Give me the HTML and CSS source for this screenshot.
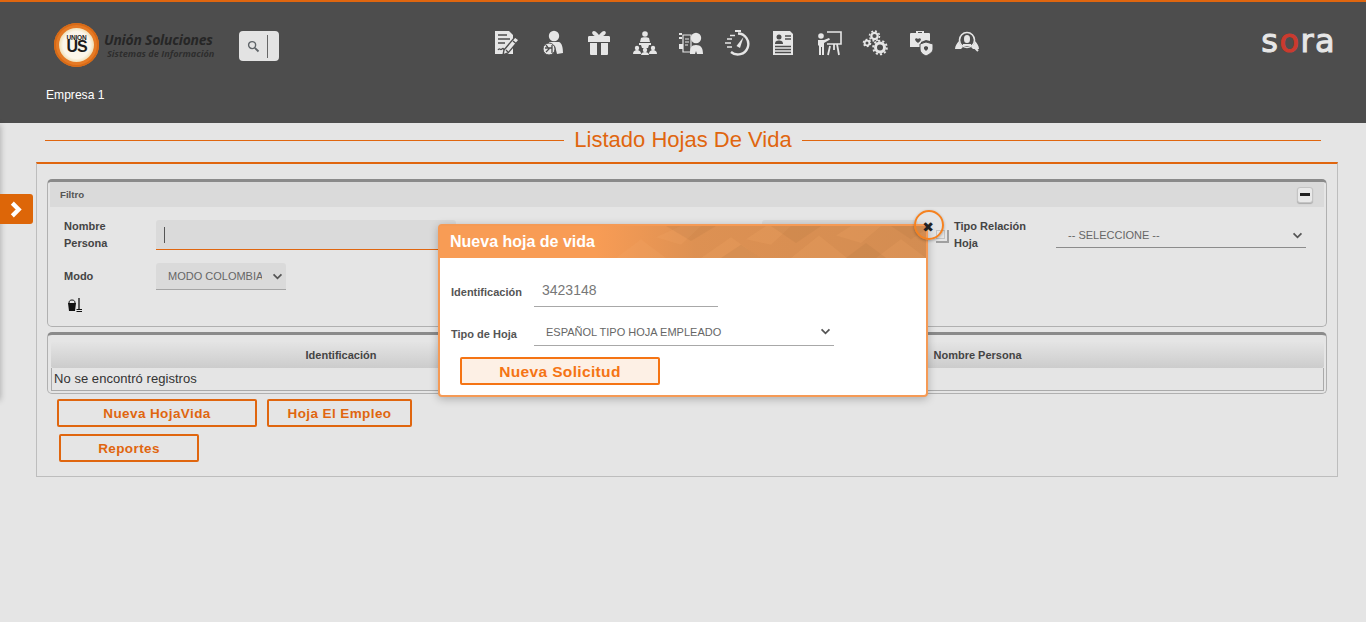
FILE: index.html
```html
<!DOCTYPE html>
<html lang="es">
<head>
<meta charset="utf-8">
<title>Listado Hojas De Vida</title>
<link rel="stylesheet" href="styles.css">
</head>
<body>
<header class="top">
  <div class="top-row">
    <div class="brand">
      <div class="brand-mark"><div class="brand-core"><span class="brand-small">UNION</span><span class="brand-big">US</span></div></div>
      <div class="brand-text"><span class="brand-name">Unión Soluciones</span><span class="brand-sub">Sistemas de Información</span></div>
    </div>
    <div class="search">
      <svg class="search-icon" viewBox="0 0 14 14"><circle cx="5.5" cy="5.5" r="3.8" fill="none" stroke="#5f6468" stroke-width="1.5"/><path d="M8.4 8.4l4 4" stroke="#5f6468" stroke-width="2"/></svg>
      <span class="search-bar"></span>
    </div>
    <nav class="icons">
      <svg class="ico" viewBox="0 0 26 26"><path d="M1 1h14l4 4v19H1z"/><path d="M4 5h9M4 9h12M4 13h7M4 20c2-3 2 1 4-1s1 2 3 0" class="cut"/><path d="M21 7l4 3-11 13-5 2 1-5z" stroke="#4d4d4d" stroke-width="1.4"/><path d="M19 11l3 2.500M12 20l2 2" class="cut"/></svg>
      <svg class="ico" viewBox="0 0 26 26"><circle cx="14" cy="6" r="5.200"/><path d="M9 12h10c3 1 4 6 4 11l-6 1-2-8-6-2z"/><circle cx="9" cy="19" r="6" stroke="#4d4d4d"/><path d="M6 15l3 4-3 3M12 15v8M5 18h7" class="cut"/></svg>
      <svg class="ico" viewBox="0 0 26 26"><path d="M2 7c0-1 1-1 2-1h5C6 5 5 1 8 1c2 0 4 3 5 4 1-1 3-4 5-4 3 0 2 4-1 5h5c1 0 2 0 2 1v5H2zM4 13h7v12H5c-1 0-1-1-1-1zM15 13h7v11s0 1-1 1h-6z"/></svg>
      <svg class="ico" viewBox="0 0 26 26"><circle cx="13" cy="4" r="2.800"/><path d="M9 8c1-1 7-1 8 0l1 4H8zM7 13h12v2h-2l-1 3h-6l-1-3H7z"/><circle cx="5" cy="18" r="2.200"/><circle cx="13" cy="20" r="2.200"/><circle cx="21" cy="18" r="2.200"/><path d="M1 24c0-3 2-4 4-4s4 1 4 4zM9 25c0-2 2-3 4-3s4 1 4 3zM17 24c0-3 2-4 4-4s4 1 4 4z"/></svg>
      <svg class="ico" viewBox="0 0 26 26"><circle cx="18" cy="8" r="5.200"/><path d="M12 24c0-6 1-9 6-9s7 3 7 9h-6l-1-3-1 3z"/><path d="M5 5h8v17H5z" fill="none" stroke="#e6e6e6" stroke-width="1.200"/><path d="M7 9h4M7 12h4M7 15h3" stroke="#e6e6e6"/><path d="M1 3h3v2H1zM1 7h3v2H1zM1 14h4v5H1z"/></svg>
      <svg class="ico" viewBox="0 0 26 26"><path d="M11 0h6v2h-6z"/><path d="M14 3.500a10.500 10.500 0 1 1-7 18.500" fill="none" stroke="#e6e6e6" stroke-width="2.400"/><path d="M12.500 16l7-9-3.500 11z"/><path d="M6 5.500h5M3 9h5M1 13h6M3 17h5" stroke="#e6e6e6" stroke-width="1.700"/></svg>
      <svg class="ico" viewBox="0 0 26 26"><path d="M3 1h17l3 3v21H3z"/><circle cx="9" cy="7" r="2.500" class="dark"/><path d="M5 14c0-3 2-3.500 4-3.500s4 .5 4 3.500z" class="dark"/><path d="M15 6h6M15 9h6M5 16.500h16M5 19.500h16M5 22.500h16" class="cut"/></svg>
      <svg class="ico" viewBox="0 0 26 26"><circle cx="5" cy="6" r="2.800"/><path d="M2 10h6l5-2 1 1.500-6 3.500v12H6v-8H5v8H3v-9l-1-1z"/><path d="M11 2h14v12H11" fill="none" stroke="#e6e6e6" stroke-width="1.600"/><path d="M14 16l-2 9M21 14l2 11M18 14v6" stroke="#e6e6e6" stroke-width="1.800"/></svg>
      <svg class="ico gears" viewBox="0 0 26 26">
        <circle cx="12.500" cy="6" r="3.200" stroke-width="2.200"/><circle cx="12.500" cy="6" r="5" stroke-width="1.500" stroke-dasharray="1.960 1.960"/>
        <circle cx="5" cy="13" r="2.400" stroke-width="1.800"/><circle cx="5" cy="13" r="3.700" stroke-width="1.200" stroke-dasharray="1.940 1.940"/>
        <circle cx="18" cy="17.500" r="4.500" stroke-width="3"/><circle cx="18" cy="17.500" r="6.800" stroke-width="2" stroke-dasharray="2.130 2.140"/>
      </svg>
      <svg class="ico" viewBox="0 0 26 26"><path d="M8 3V1h8v2h5c1 0 1 1 1 1v7l-4-1-5 2v5H2V4s0-1 1-1zM10 3h4V2h-4z"/><path d="M7 9c1-1 2-1 3 0 1-1 2-1 3 0 0 2-2 3-3 4-1-1-3-2-3-4z" class="dark"/><path d="M18 12l7 2v5c0 3-3 5-7 7-4-2-6-4-6-7v-5z" stroke="#4d4d4d"/><path d="M16 17l2-1 2 1v2l-2 2-2-2z" class="dark"/></svg>
      <svg class="ico" viewBox="0 0 26 26"><circle cx="13" cy="10" r="7.500" fill="none" stroke="#e6e6e6" stroke-width="1.600"/><path d="M13 5c2 0 3 1 3 4s-1 4-3 4-3-1-3-4 1-4 3-4zM9 14h8v2H9z"/><path d="M1 19c0-3 2-6 4-8l1 3 3 3-2 2zM25 19c0-3-2-6-4-8l-1 3-3 3 2 2z"/><path d="M18 15l6 6" stroke="#e6e6e6" stroke-width="2"/></svg>
    </nav>
    <div class="sora">s<span class="sora-o">o</span>ra</div>
  </div>
  <div class="company">Empresa 1</div>
</header>

<main>
  <div class="title-row"><span class="rule"></span><h1 class="title">Listado Hojas De Vida</h1><span class="rule"></span></div>

  <section class="board">
    <div class="panel filter">
      <div class="panel-head">
        <span class="panel-title">Filtro</span>
        <span class="collapse"><span class="collapse-bar"></span></span>
      </div>
      <div class="filter-grid">
        <label class="lbl">Nombre<br>Persona</label>
        <div class="text-field"><span class="caret"></span></div>
        <span class="gap-cell"></span>
        <div class="hidden-field"></div>
        <div class="copy-cell"><span class="copy-a"></span><span class="copy-b"></span></div>
        <label class="lbl">Tipo Relación<br>Hoja</label>
        <div class="select plain"><span class="select-text">-- SELECCIONE --</span><svg class="chev" viewBox="0 0 12 8"><path d="M1.500 1.500L6 6l4.500-4.500" /></svg></div>
        <label class="lbl lbl-mid">Modo</label>
        <div class="select mode"><span class="select-text">MODO COLOMBIA</span><svg class="chev" viewBox="0 0 12 8"><path d="M1.500 1.500L6 6l4.500-4.500" /></svg></div>
        <div class="clean">
          <svg viewBox="0 0 16 16" class="clean-ico"><path d="M2 6c0-2 1-3 3-3s3 1 3 3v1H2z" fill="none" stroke="#111" stroke-width="1"/><path d="M1 6h8l-1 8H2z" fill="#111"/><path d="M12 1v11" stroke="#111" stroke-width="1.300"/><path d="M9.500 12.500h5.500M9.500 14.500h5.500" stroke="#111" stroke-width="1.200"/></svg>
        </div>
      </div>
    </div>

    <div class="panel results">
      <div class="t-head"><span class="t-col t-a">Identificación</span><span class="t-col t-b">Nombre Persona</span></div>
      <div class="t-row">No se encontró registros</div>
    </div>

    <div class="actions">
      <button class="btn btn-a">Nueva HojaVida</button>
      <button class="btn btn-b">Hoja El Empleo</button>
    </div>
    <div class="actions second">
      <button class="btn btn-c">Reportes</button>
    </div>
  </section>
</main>

<div class="drawer-edge"></div>
<div class="drawer-tab"><svg viewBox="0 0 12 16" class="drawer-chev"><path d="M3 2l6 6-6 6" /></svg></div>

<div class="modal">
  <div class="modal-head">
    <svg class="modal-pattern" viewBox="0 0 330 34" preserveAspectRatio="none">
      <defs><linearGradient id="fade" x1="0" x2="1" y1="0" y2="0"><stop offset="0" stop-color="#b5804f" stop-opacity="0"/><stop offset=".3" stop-color="#b5804f" stop-opacity=".4"/><stop offset="1" stop-color="#b5804f" stop-opacity=".55"/></linearGradient></defs>
      <rect width="330" height="34" fill="url(#fade)"/>
      <path d="M20 34L45 14l25 20zM60 12L85 0h20L85 20zM105 34l30-22 30 22zM150 14L170 0h25l-20 20zM195 34l28-24 28 24zM240 10l15-10h30l-20 18zM280 34l25-20 25 20z" fill="#f7a868" fill-opacity=".2"/>
      <path d="M70 0l25 16 25-16zM125 34l20-14 20 14zM175 0l25 18 25-18zM250 34l20-16 20 16zM295 0l20 14 15-10V0z" fill="#a8713f" fill-opacity=".16"/>
    </svg>
    <span class="modal-title">Nueva hoja de vida</span>
  </div>
  <div class="modal-body">
    <div class="m-row">
      <label class="m-lbl">Identificación</label>
      <div class="m-input">3423148</div>
    </div>
    <div class="m-row m-row2">
      <label class="m-lbl m-lbl2">Tipo de Hoja</label>
      <div class="m-select"><span class="m-select-text">ESPAÑOL TIPO HOJA EMPLEADO</span><svg class="chev" viewBox="0 0 12 8"><path d="M1.500 1.500L6 6l4.500-4.500" /></svg></div>
    </div>
    <button class="m-btn">Nueva Solicitud</button>
  </div>
  <button class="m-close" aria-label="Cerrar">✖</button>
</div>
</body>
</html>
```
FILE: styles.css
```css
* { box-sizing: border-box; }
html, body { margin: 0; padding: 0; }
body {
  width: 1366px;
  height: 622px;
  overflow: hidden;
  background: #e5e5e5;
  font-family: "Liberation Sans", Arial, sans-serif;
  color: #333;
}

/* header */
.top {
  height: 123px;
  background: #4d4d4d;
  border-top: 2px solid #e0660f;
}
.top-row { display: flex; align-items: flex-start; height: 86px; }
.brand { display: flex; align-items: center; margin: 21px 0 0 54px; width: 161px; }
.brand-mark {
  width: 45px; height: 44px; flex: none;
  border-radius: 50%;
  background: #e57a25;
  padding: 5px;
  box-shadow: inset 0 0 0 2px #d76a16;
}
.brand-core {
  width: 35px; height: 34px;
  border-radius: 50%;
  background: radial-gradient(circle, #fbf6ea 0 55%, #ecd9a8 75%, #f3e9cf 100%);
  display: flex; flex-direction: column; align-items: center; justify-content: center;
  color: #1c1c1c;
  font-weight: 700;
  line-height: 1;
}
.brand-small { font-size: 6.5px; letter-spacing: -.2px; }
.brand-big { font-size: 16px; margin-top: -2px; letter-spacing: -1px; }
.brand-text { display: flex; flex-direction: column; margin-left: 5px; font-family: "Open Sans", sans-serif; font-style: italic; font-weight: 700; color: #262626; white-space: nowrap; }
.brand-name { font-size: 13.9px; line-height: 17px; letter-spacing: -.2px; }
.brand-sub { font-size: 9.2px; line-height: 11px; margin-left: 3px; color: #2e2e2e; }

.search {
  width: 40px; height: 30px;
  margin: 29px 0 0 24px;
  background: #e3e3e3;
  border-radius: 4px;
  display: flex; align-items: center;
  padding-left: 8px;
}
.search-icon { width: 13px; height: 13px; margin-right: 7px; }
.search-bar { width: 1px; height: 23px; background: #666; }

.icons { display: flex; gap: 20px; margin: 28px 0 0 215px; }
.ico { width: 26px; height: 26px; fill: #e6e6e6; display: block; }
.cut { fill: none; stroke: #4d4d4d; stroke-width: 1.3; }
.dark { fill: #4d4d4d; }
.gears circle { fill: none; stroke: #e6e6e6; }

.sora {
  margin: 20px 30px 0 auto;
  font-family: "DejaVu Sans", sans-serif;
  font-size: 32px;
  font-weight: 400;
  line-height: 38px;
  letter-spacing: 1.4px;
  color: #e6e6e6;
  -webkit-text-stroke: 1px currentColor;
}
.sora-o { color: #cb3a2e; }

.company { margin-left: 46px; font-size: 12.1px; line-height: 14px; color: #fff; }

/* title */
.title-row { display: flex; align-items: center; padding: 0 45px; height: 34px; }
.rule { flex: 1; height: 1px; background: #e0660f; }
.title { margin: 0 10px; font-size: 22px; font-weight: 400; line-height: 34px; color: #e0660f; white-space: nowrap; }

/* board */
.board {
  margin: 5px 28px 0 36px;
  height: 315px;
  border: 1px solid #bdbdbd;
  border-top: 2px solid #e0660f;
  padding: 15px 10px 0;
}
.panel {
  background: #e5e5e5;
  border: 1px solid #b0b0b0;
  border-top: 3px solid #8a8a8a;
  border-radius: 5px;
  padding: 0 2px;
}
.filter { height: 148px; }
.panel-head {
  height: 25px;
  background: #dadada;
  display: flex; align-items: center; justify-content: space-between;
  padding: 0 11px 0 10px;
}
.panel-title { font-size: 9.7px; font-weight: 700; color: #555; }
.collapse {
  width: 16px; height: 16px;
  margin-right: 0;
  background: #e9e9e9;
  border: 1px solid #c4c4c4;
  border-radius: 3px;
  box-shadow: 0 1px 1px #aaa;
  display: flex; align-items: center; justify-content: center;
}
.collapse-bar { width: 10px; height: 2.500px; background: #222; }

.filter-grid {
  display: grid;
  grid-template-columns: 92px 300px 306px 156px 36px 102px 250px;
  grid-template-rows: 43px 34px auto;
  padding: 11px 0 0 14px;
}
.lbl { font-size: 11px; font-weight: 700; line-height: 17px; color: #444; }
.lbl-mid { grid-row: 2; grid-column: 1; align-self: center; margin-bottom: 4px; }
.text-field {
  height: 30px; margin-top: 2px;
  background: #dadada;
  border-bottom: 1px solid #e0660f;
  border-radius: 3px 3px 0 0;
  display: flex; align-items: center; padding-left: 8px;
}
.caret { width: 1px; height: 16px; background: #555; }
.hidden-field { height: 30px; margin-top: 2px; background: #dadada; border-radius: 3px 3px 0 0; }
.copy-cell { position: relative; }
.copy-a { position: absolute; left: 18px; top: 12px; width: 9px; height: 9px; border: 1px solid #c4c4c4; }
.copy-b { position: absolute; left: 18px; top: 12px; width: 13px; height: 13px; border-right: 2px solid #a0a0a0; border-bottom: 2px solid #a0a0a0; }
.select { display: flex; align-items: center; justify-content: space-between; font-size: 11px; color: #666; }
.select.plain {
  height: 30px; padding: 5px 0 0 12px;
  border-bottom: 1px solid #8c8c8c;
}
.select.mode {
  grid-row: 2; grid-column: 2;
  width: 130px; height: 27px; margin-top: 2px;
  background: #dadada;
  border-bottom: 1px solid #a5a5a5;
  border-radius: 3px 3px 0 0;
  padding: 0 0 0 12px;
  overflow: hidden;
}
.select.mode .select-text { width: 94px; overflow: hidden; white-space: nowrap; flex: none; }
.chev { width: 11px; height: 7px; fill: none; stroke: #555; stroke-width: 2; flex: none; margin-right: 3px; }
.clean { grid-row: 3; grid-column: 1 / span 2; padding: 2px 0 0 3px; }
.clean-ico { width: 16px; height: 16px; display: block; }

.results { margin-top: 5px; height: 62px; padding: 7px 2px 0 3px; }
.t-head {
  height: 26px;
  background: linear-gradient(#e4e4e4, #cccccc);
  border-radius: 2px;
  display: flex; align-items: center;
  font-size: 11px; font-weight: 700; color: #444;
}
.t-col { text-align: center; }
.t-a { width: 580px; }
.t-b { width: 693px; }
.t-row {
  height: 23px;
  padding-left: 2px;
  font-size: 13px; line-height: 22px; letter-spacing: .05px; color: #333;
  border: 1px solid #aaa;
  border-top: 0;
}

.actions { display: flex; gap: 10px; margin: 5px 0 0 10px; }
.actions.second { margin: 7px 0 0 12px; }
.btn {
  height: 28px;
  padding: 0;
  background: transparent;
  border: 2px solid #e0660f;
  border-radius: 2px;
  color: #e0660f;
  font-family: "Liberation Sans", Arial, sans-serif;
  font-size: 13.5px; font-weight: 700; letter-spacing: .4px;
}
.btn-a { width: 200px; }
.btn-b { width: 145px; }
.btn-c { width: 140px; }

/* drawer */
.drawer-edge { position: absolute; left: -6px; top: 125px; width: 6px; height: 275px; box-shadow: 0 0 6px rgba(0,0,0,.3); }
.drawer-tab {
  position: absolute; left: 0; top: 194px;
  width: 33px; height: 30px;
  background: #dd6608;
  border-radius: 0 3px 3px 0;
  display: flex; align-items: center; justify-content: center;
  padding-right: 2px;
}
.drawer-chev { width: 13px; height: 17px; fill: none; stroke: #fff; stroke-width: 4; }

/* modal */
.modal {
  position: absolute; left: 438px; top: 224px;
  width: 490px; height: 173px;
  background: #fff;
  border: 2px solid #f59a55;
  border-radius: 4px;
  box-shadow: 0 2px 8px rgba(0,0,0,.25);
}
.modal-head {
  position: relative;
  height: 32px;
  background: #f89c55;
  display: flex; align-items: center;
  padding-left: 10px;
  overflow: hidden;
}
.modal-pattern { position: absolute; right: 0; top: 0; width: 330px; height: 32px; }
.modal-title { position: relative; color: #fff; font-size: 16px; font-weight: 700; }
.modal-body { padding: 16px 0 0 11px; }
.m-row { display: flex; align-items: flex-end; }
.m-row2 { margin-top: 13px; }
.m-lbl { width: 83px; font-size: 11px; font-weight: 700; color: #555; line-height: 14px; padding-bottom: 8px; }
.m-lbl2 { padding-bottom: 5px; }
.m-input {
  width: 184px; height: 33px;
  padding: 0 8px;
  font-size: 14px; line-height: 33px; color: #777;
  border-bottom: 1px solid #a8a8a8;
}
.m-select {
  width: 300px; height: 26px;
  padding: 0 0 2px 12px;
  font-size: 11px; color: #666;
  border-bottom: 1px solid #a8a8a8;
  display: flex; align-items: center; justify-content: space-between;
}
.m-btn {
  display: block;
  width: 200px; height: 28px;
  margin: 11px 0 0 9px;
  padding: 2px 0 0;
  background: #fdf0e5;
  border: 2px solid #f57414;
  border-radius: 2px;
  color: #f57414;
  font-family: "Liberation Sans", Arial, sans-serif;
  font-size: 15.5px; font-weight: 700; letter-spacing: .35px;
}
.m-close {
  position: absolute; right: -18px; top: -16px;
  width: 30px; height: 30px;
  padding: 2px 2px 0 0;
  border: 2px solid #f58220;
  border-radius: 50%;
  background: transparent;
  color: #222;
  font-family: "DejaVu Sans", sans-serif;
  font-size: 14px; line-height: 26px;
  box-shadow: 0 1px 3px rgba(0,0,0,.3);
}
```
